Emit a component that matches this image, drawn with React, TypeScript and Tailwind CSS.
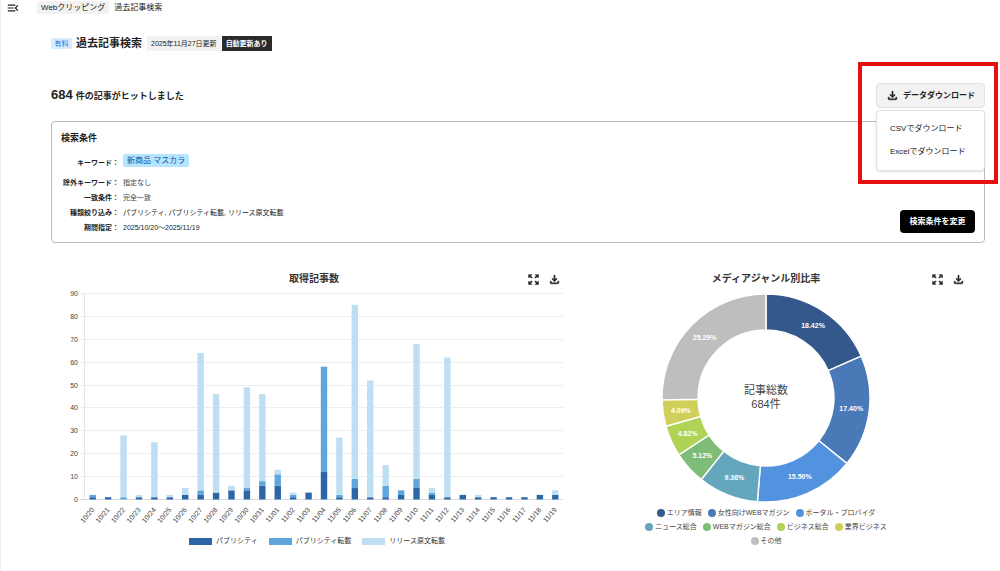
import { MdMenuOpen, MdOutlineFileDownload, MdZoomOutMap } from "react-icons/md";

const days: [string, number, number, number][] = [
  ["10/20", 1, 1, 0],
  ["10/21", 1, 0, 0],
  ["10/22", 0, 1, 27],
  ["10/23", 1, 0, 1],
  ["10/24", 1, 0, 24],
  ["10/25", 1, 0, 1],
  ["10/26", 2, 0, 3],
  ["10/27", 2, 2, 60],
  ["10/28", 3, 0, 43],
  ["10/29", 4, 0, 2],
  ["10/30", 4, 1, 44],
  ["10/31", 6, 2, 38],
  ["11/01", 6, 5, 2],
  ["11/02", 1, 1, 1],
  ["11/03", 3, 0, 0],
  ["11/04", 12, 46, 0],
  ["11/05", 1, 1, 25],
  ["11/06", 5, 4, 76],
  ["11/07", 1, 0, 51],
  ["11/08", 1, 5, 9],
  ["11/09", 2, 2, 0],
  ["11/10", 5, 4, 59],
  ["11/11", 2, 1, 2],
  ["11/12", 1, 0, 61],
  ["11/13", 2, 0, 0],
  ["11/14", 1, 0, 1],
  ["11/15", 1, 0, 0],
  ["11/16", 1, 0, 0],
  ["11/17", 1, 0, 0],
  ["11/18", 2, 0, 0],
  ["11/19", 2, 0, 2],
];

const barColors = ["#2d66a8", "#5ea6dc", "#bedef2"];

const barLegend = [
  { name: "パブリシティ", swatch: "bg-[#2d66a8]" },
  { name: "パブリシティ転載", swatch: "bg-[#5ea6dc]" },
  { name: "リリース原文転載", swatch: "bg-[#bedef2]" },
];

const genres = [
  { name: "エリア情報", value: 18.42, color: "#34588b", dot: "bg-[#34588b]" },
  { name: "女性向けWEBマガジン", value: 17.4, color: "#4a79b7", dot: "bg-[#4a79b7]" },
  { name: "ポータル・プロバイダ", value: 15.5, color: "#5292df", dot: "bg-[#5292df]" },
  { name: "ニュース総合", value: 9.36, color: "#64a6bc", dot: "bg-[#64a6bc]" },
  { name: "WEBマガジン総合", value: 5.12, color: "#7dbd78", dot: "bg-[#7dbd78]" },
  { name: "ビジネス総合", value: 4.82, color: "#b0d356", dot: "bg-[#b0d356]" },
  { name: "業界ビジネス", value: 4.09, color: "#cfd05a", dot: "bg-[#cfd05a]" },
  { name: "その他", value: 25.29, color: "#bebebe", dot: "bg-[#bebebe]" },
];

const conditions = [
  { label: "除外キーワード：", value: "指定なし", tone: "text-[#444]" },
  { label: "一致条件：", value: "完全一致", tone: "text-[#444]" },
  { label: "種類絞り込み：", value: "パブリシティ, パブリシティ転載, リリース原文転載", tone: "text-[#222]" },
  { label: "期間指定：", value: "2025/10/20～2025/11/19", tone: "text-[#222]" },
];

function BarChart() {
  const left = 18;
  const right = 496;
  const base = 212;
  const unit = 2.29;
  const step = (right - left) / days.length;

  return (
    <svg viewBox="0 0 500 240" className="w-full" role="img" aria-label="取得記事数">
      {[0, 10, 20, 30, 40, 50, 60, 70, 80, 90].map((tick) => {
        const y = Math.round(base - tick * unit) - 0.5;
        return (
          <g key={tick}>
            <line x1={left - 5} x2={right} y1={y} y2={y} stroke={tick === 0 ? "#dddddd" : "#eeeeee"} />
            <text x={11} y={y + 2} textAnchor="end" fontSize={7} fill="#444">
              {tick}
            </text>
          </g>
        );
      })}
      <line x1={left - 0.5} x2={left - 0.5} y1={base - 90 * unit} y2={base} stroke="#e6e6e6" />
      {days.map(([date, ...values], i) => {
        const center = left + step * (i + 0.5);
        let sum = 0;
        return (
          <g key={date}>
            {values.map((value, j) => {
              sum += value;
              return (
                <rect
                  key={j}
                  x={center - 3.2}
                  y={base - sum * unit - 0.5}
                  width={6.4}
                  height={value * unit}
                  fill={barColors[j]}
                />
              );
            })}
            <text
              transform={`translate(${center + 2} ${base + 10}) rotate(-50)`}
              textAnchor="end"
              fontSize={7}
              fill="#444"
            >
              {date}
            </text>
          </g>
        );
      })}
    </svg>
  );
}

function point(radius: number, percent: number) {
  const angle = (percent / 100) * Math.PI * 2;
  return [104 + radius * Math.sin(angle), 104 - radius * Math.cos(angle)];
}

function DonutChart() {
  let start = 0;
  return (
    <svg viewBox="0 0 208 208" className="w-52" role="img" aria-label="メディアジャンル別比率">
      {genres.map((genre) => {
        const end = start + genre.value;
        const [ax, ay] = point(104, start);
        const [bx, by] = point(104, end);
        const [cx, cy] = point(68, end);
        const [dx, dy] = point(68, start);
        const [tx, ty] = point(86, (start + end) / 2);
        start = end;
        return (
          <g key={genre.name}>
            <path
              d={`M${ax} ${ay}A104 104 0 0 1 ${bx} ${by}L${cx} ${cy}A68 68 0 0 0 ${dx} ${dy}Z`}
              fill={genre.color}
              stroke="#fff"
              strokeWidth={1.4}
            />
            <text x={tx} y={ty + 2} textAnchor="middle" fontSize={7} fontWeight={700} fill="#fff">
              {genre.value.toFixed(2)}%
            </text>
          </g>
        );
      })}
      <text x={104} y={100} textAnchor="middle" fontSize={11} fill="#444">
        記事総数
      </text>
      <text x={104} y={114} textAnchor="middle" fontSize={11} fill="#444">
        684件
      </text>
    </svg>
  );
}

function ChartHeader({ title }: { title: string }) {
  return (
    <div className="grid grid-cols-[1fr_auto_1fr] items-center h-4">
      <h2 className="col-start-2 text-[10px] font-bold text-[#333]">{title}</h2>
      <div className="flex justify-end gap-2 pt-[3px]">
        <button type="button" aria-label="拡大">
          <MdZoomOutMap className="size-[13px] [&>path:last-child]:stroke-1" />
        </button>
        <button type="button" aria-label="ダウンロード">
          <MdOutlineFileDownload className="size-[13px] [&>path:last-child]:stroke-1" />
        </button>
      </div>
    </div>
  );
}

export default function App() {
  return (
    <div className="min-h-screen bg-white border-l border-[#eeeeee] text-[#222] font-['Liberation_Sans','Noto_Sans_CJK_JP',sans-serif]">
      <header className="flex items-center h-[15px] pl-[5px]">
        <button type="button" aria-label="メニュー" className="w-[31px]">
          <MdMenuOpen className="size-[14px]" />
        </button>
        <nav className="flex items-center gap-[5px] text-[8px] leading-[13px]">
          <a href="#clipping" className="rounded-xs bg-[#f2f2f2] px-1">
            Webクリッピング
          </a>
          <span>過去記事検索</span>
        </nav>
      </header>

      <main className="pl-[50px] pr-[15px]">
        <div className="flex items-center h-4 mt-5 text-[7px] leading-[15px]">
          <span className="w-[21px] rounded-xs bg-[#d3ecff] text-center leading-[11px] text-[#1c74d8]">有料</span>
          <h1 className="ml-1 text-[11px] font-bold">過去記事検索</h1>
          <span className="ml-[5px] bg-[#f2f2f2] px-1">2025年11月27日更新</span>
          <span className="ml-px bg-[#2b2b2b] px-1 font-bold text-white">自動更新あり</span>
        </div>

        <div className="flex items-center justify-between mt-8">
          <p className="flex items-baseline gap-[3px] pb-[2px] text-[9px] font-bold">
            <span className="text-[13px]">684</span>
            件の記事がヒットしました
          </p>
          <div className="relative">
            <button
              type="button"
              aria-expanded="true"
              className="flex items-center justify-center gap-1 w-[109px] h-[25px] rounded border border-[#e2e2e2] bg-[#f2f2f2] text-[8px] font-bold"
            >
              <MdOutlineFileDownload className="size-[13px] [&>path:last-child]:stroke-1" />
              データダウンロード
            </button>
            <div className="absolute z-10 top-[27px] right-0 flex flex-col w-[109px] h-[61px] rounded border border-[#e2e2e2] bg-white py-[6px] shadow-sm">
              <button type="button" className="flex-1 pl-[13px] text-left text-[8px]">
                CSVでダウンロード
              </button>
              <button type="button" className="flex-1 pl-[13px] text-left text-[8px]">
                Excelでダウンロード
              </button>
            </div>
            <div className="absolute z-20 -top-[21px] -right-[13px] w-[140px] h-[122px] border-4 border-[#e60f14] pointer-events-none" />
          </div>
        </div>

        <section className="flex items-end justify-between mt-[13px] h-[122px] rounded border border-[#bbbbbb] px-[9px] pt-[10px] pb-[9px]">
          <div className="self-start">
            <h2 className="text-[9px] leading-[13px] font-bold">検索条件</h2>
            <dl className="grid grid-cols-[58px_auto] gap-x-1 text-[7px] leading-[15px]">
              <dt className="pt-[10px] text-right font-bold">キーワード：</dt>
              <dd className="pt-[9px] pb-2">
                <span className="block w-fit rounded-xs bg-[#b5e5ff] px-1 text-[8px] leading-[13px] text-[#14529a]">
                  新商品 マスカラ
                </span>
              </dd>
              {conditions.map((item) => (
                <div key={item.label} className="contents">
                  <dt className="text-right font-bold whitespace-nowrap">{item.label}</dt>
                  <dd className={item.tone}>{item.value}</dd>
                </div>
              ))}
            </dl>
          </div>
          <button type="button" className="w-[75px] h-[23px] rounded bg-black text-[8px] font-bold text-white">
            検索条件を変更
          </button>
        </section>

        <div className="grid grid-cols-[500fr_398fr] mt-[27px] pl-4 pr-5">
          <section>
            <div className="pr-[6px] pb-[2px]">
              <ChartHeader title="取得記事数" />
            </div>
            <BarChart />
            <ul className="flex justify-center gap-[11px] mt-2 text-[7px] leading-[10px] text-[#333]">
              {barLegend.map((item) => (
                <li key={item.name} className="flex items-center gap-1">
                  <span className={`w-[23px] h-[7px] ${item.swatch}`} />
                  {item.name}
                </li>
              ))}
            </ul>
          </section>

          <section className="flex flex-col">
            <ChartHeader title="メディアジャンル別比率" />
            <div className="flex justify-center mt-2">
              <DonutChart />
            </div>
            <ul className="flex flex-wrap justify-center gap-x-[6px] w-[250px] mx-auto mt-1 text-[7px] leading-[14px] text-[#444]">
              {genres.map((genre) => (
                <li key={genre.name} className="flex items-center gap-[2px]">
                  <span className={`size-2 rounded-full ${genre.dot}`} />
                  {genre.name}
                </li>
              ))}
            </ul>
          </section>
        </div>
      </main>
    </div>
  );
}
